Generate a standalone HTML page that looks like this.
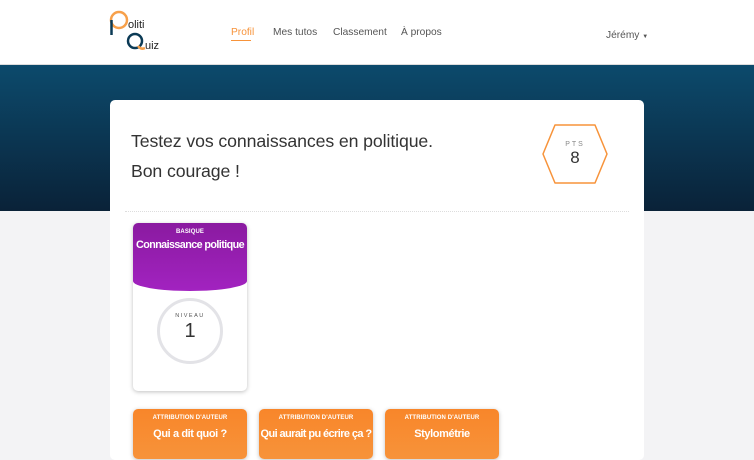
<!DOCTYPE html><html><head><style>
body{margin:0;width:754px;height:447px;overflow:hidden;background:#f3f3f5;font-family:"Liberation Sans",sans-serif;position:relative}
.hdr{position:absolute;left:0;top:0;width:754px;height:64px;background:#fff;border-bottom:1px solid #ddd}
.nav{position:absolute;top:27px;font-size:10.2px;color:#555}
.ban{position:absolute;top:65px;left:0;width:754px;height:146px;background:linear-gradient(#0c4a6c,#0a2238)}
.card{position:absolute;left:110px;top:100px;width:534px;height:360px;background:#fff;border-radius:5px}
.t{position:absolute;left:21px;font-size:17.7px;color:#333;letter-spacing:-0.1px}
.tile{position:absolute;width:114px;border-radius:5px;box-shadow:0 1px 4px rgba(0,0,0,.25);overflow:hidden;text-align:center;color:#fff;white-space:nowrap}
.o{top:409px;height:50px;background:linear-gradient(#f8862a,#f7933a)}
.sm{font-size:6px;font-weight:bold;padding-top:6px;letter-spacing:.1px}
.bg{font-size:11px;font-weight:bold;margin-top:7px;letter-spacing:-0.4px}
</style></head><body>
<div class="hdr">
<svg style="position:absolute;left:108px;top:8px" width="60" height="44"><circle cx="11" cy="12" r="8" fill="none" stroke="#f7a04a" stroke-width="2.5"/><line x1="3.5" y1="12" x2="3.5" y2="27" stroke="#0b3a55" stroke-width="2.5"/><text x="20" y="20" font-size="11" fill="#222" font-family="Liberation Sans">oliti</text><circle cx="27" cy="33" r="7" fill="none" stroke="#0b3a55" stroke-width="2.5"/><path d="M30 38 q3 4 7 2" stroke="#f7a04a" stroke-width="2.5" fill="none"/><text x="37" y="41" font-size="11" fill="#222" font-family="Liberation Sans">uiz</text></svg>
<div class="nav" style="left:231px;color:#f7933a">Profil</div>
<div style="position:absolute;left:231px;top:40px;width:20px;height:1px;background:#f7933a"></div>
<div class="nav" style="left:273px">Mes tutos</div>
<div class="nav" style="left:333px">Classement</div>
<div class="nav" style="left:401px">À propos</div>
<div class="nav" style="left:606px;top:30px">Jérémy <span style="font-size:6px">▼</span></div>
</div>
<div class="ban"></div>
<div class="card">
<div class="t" style="top:31px">Testez vos connaissances en politique.</div>
<div class="t" style="top:61px">Bon courage !</div>
<svg style="position:absolute;left:432px;top:24px" width="68" height="62"><polygon points="13,1 53,1 65,30 53,59 13,59 1,30" fill="none" stroke="#f7933a" stroke-width="1.5" stroke-linejoin="round"/><text x="33" y="22" font-size="7" fill="#888" text-anchor="middle" letter-spacing="2">PTS</text><text x="33" y="39" font-size="17" fill="#333" text-anchor="middle">8</text></svg>
<div style="position:absolute;left:15px;top:111px;width:504px;border-top:1px dotted #ddd"></div>
</div>
<div class="tile" style="left:133px;top:223px;height:168px;background:#fff">
<div style="height:68px;background:linear-gradient(#8a1aa0,#a223c0);border-radius:0 0 50% 50%/0 0 10px 10px">
<div class="sm">BASIQUE</div><div class="bg" style="font-size:10.8px;margin-top:4px;letter-spacing:-0.6px">Connaissance politique</div></div>
<div style="position:absolute;left:24px;top:75px;width:60px;height:60px;border:3px solid #e3e3e7;border-radius:50%;color:#333">
<div style="font-size:5.5px;letter-spacing:1.5px;margin-top:12px;color:#555">NIVEAU</div><div style="font-size:20px;margin-top:1px">1</div></div>
</div>
<div class="tile o" style="left:133px"><div class="sm">ATTRIBUTION D'AUTEUR</div><div class="bg">Qui a dit quoi ?</div></div>
<div class="tile o" style="left:259px"><div class="sm">ATTRIBUTION D'AUTEUR</div><div class="bg" style="letter-spacing:-0.6px">Qui aurait pu écrire ça ?</div></div>
<div class="tile o" style="left:385px"><div class="sm">ATTRIBUTION D'AUTEUR</div><div class="bg">Stylométrie</div></div>
</body></html>
